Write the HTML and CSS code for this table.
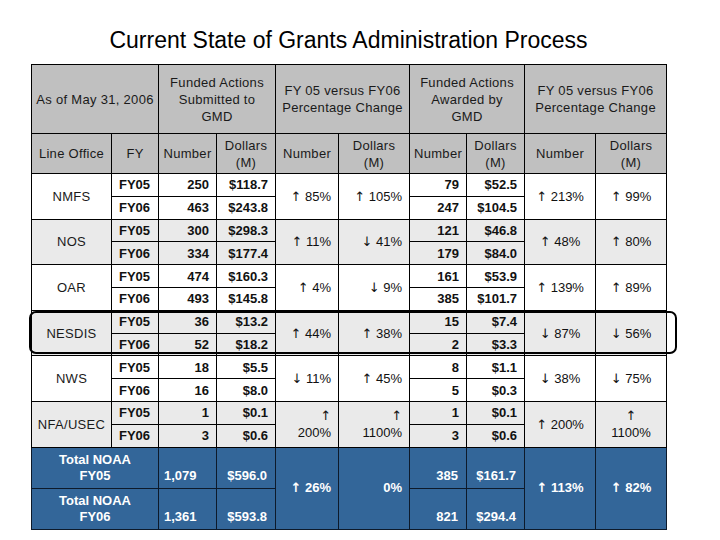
FILE: index.html
```html
<!DOCTYPE html>
<html>
<head>
<meta charset="utf-8">
<link rel="stylesheet" href="styles.css">
</head>
<body>
<div class="slide">
  <h1 class="title">Current State of Grants Administration Process</h1>
  <div class="table-wrap">
    <table class="grid">
      <colgroup>
        <col class="c-office"><col class="c-fy"><col class="c-num"><col class="c-dol">
        <col class="c-pn"><col class="c-pd"><col class="c-num2"><col class="c-dol2">
        <col class="c-pn2"><col class="c-pd2">
      </colgroup>
      <thead>
        <tr class="h1">
          <th colspan="2">As of May 31, 2006</th>
          <th colspan="2">Funded Actions<br>Submitted to<br>GMD</th>
          <th colspan="2">FY 05 versus FY06<br>Percentage Change</th>
          <th colspan="2">Funded Actions<br>Awarded by<br>GMD</th>
          <th colspan="2">FY 05 versus FY06<br>Percentage Change</th>
        </tr>
        <tr class="h2">
          <th>Line Office</th><th>FY</th><th>Number</th><th>Dollars<br>(M)</th>
          <th>Number</th><th>Dollars<br>(M)</th><th>Number</th><th>Dollars<br>(M)</th>
          <th>Number</th><th>Dollars<br>(M)</th>
        </tr>
      </thead>
      <tbody>
        <tr class="r white">
          <td rowspan="2" class="office">NMFS</td><td class="fy">FY05</td><td class="val">250</td><td class="val">$118.7</td>
          <td rowspan="2" class="pl"><span class="arr">↑</span> 85%</td><td rowspan="2" class="pl"><span class="arr">↑</span> 105%</td>
          <td class="val">79</td><td class="val">$52.5</td>
          <td rowspan="2" class="pr"><span class="arr">↑</span> 213%</td><td rowspan="2" class="pr"><span class="arr">↑</span> 99%</td>
        </tr>
        <tr class="r white">
          <td class="fy">FY06</td><td class="val">463</td><td class="val">$243.8</td>
          <td class="val">247</td><td class="val">$104.5</td>
        </tr>
        <tr class="r gray">
          <td rowspan="2" class="office">NOS</td><td class="fy">FY05</td><td class="val">300</td><td class="val">$298.3</td>
          <td rowspan="2" class="pl"><span class="arr">↑</span> 11%</td><td rowspan="2" class="pl"><span class="arr">↓</span> 41%</td>
          <td class="val">121</td><td class="val">$46.8</td>
          <td rowspan="2" class="pr"><span class="arr">↑</span> 48%</td><td rowspan="2" class="pr"><span class="arr">↑</span> 80%</td>
        </tr>
        <tr class="r gray">
          <td class="fy">FY06</td><td class="val">334</td><td class="val">$177.4</td>
          <td class="val">179</td><td class="val">$84.0</td>
        </tr>
        <tr class="r white">
          <td rowspan="2" class="office">OAR</td><td class="fy">FY05</td><td class="val">474</td><td class="val">$160.3</td>
          <td rowspan="2" class="pl"><span class="arr">↑</span> 4%</td><td rowspan="2" class="pl"><span class="arr">↓</span> 9%</td>
          <td class="val">161</td><td class="val">$53.9</td>
          <td rowspan="2" class="pr"><span class="arr">↑</span> 139%</td><td rowspan="2" class="pr"><span class="arr">↑</span> 89%</td>
        </tr>
        <tr class="r white">
          <td class="fy">FY06</td><td class="val">493</td><td class="val">$145.8</td>
          <td class="val">385</td><td class="val">$101.7</td>
        </tr>
        <tr class="r gray">
          <td rowspan="2" class="office">NESDIS</td><td class="fy">FY05</td><td class="val">36</td><td class="val">$13.2</td>
          <td rowspan="2" class="pl"><span class="arr">↑</span> 44%</td><td rowspan="2" class="pl"><span class="arr">↑</span> 38%</td>
          <td class="val">15</td><td class="val">$7.4</td>
          <td rowspan="2" class="pr"><span class="arr">↓</span> 87%</td><td rowspan="2" class="pr"><span class="arr">↓</span> 56%</td>
        </tr>
        <tr class="r gray">
          <td class="fy">FY06</td><td class="val">52</td><td class="val">$18.2</td>
          <td class="val">2</td><td class="val">$3.3</td>
        </tr>
        <tr class="r white">
          <td rowspan="2" class="office">NWS</td><td class="fy">FY05</td><td class="val">18</td><td class="val">$5.5</td>
          <td rowspan="2" class="pl"><span class="arr">↓</span> 11%</td><td rowspan="2" class="pl"><span class="arr">↑</span> 45%</td>
          <td class="val">8</td><td class="val">$1.1</td>
          <td rowspan="2" class="pr"><span class="arr">↓</span> 38%</td><td rowspan="2" class="pr"><span class="arr">↓</span> 75%</td>
        </tr>
        <tr class="r white">
          <td class="fy">FY06</td><td class="val">16</td><td class="val">$8.0</td>
          <td class="val">5</td><td class="val">$0.3</td>
        </tr>
        <tr class="r gray">
          <td rowspan="2" class="office">NFA/USEC</td><td class="fy">FY05</td><td class="val">1</td><td class="val">$0.1</td>
          <td rowspan="2" class="pl wrap"><span class="arr">↑</span><br>200%</td><td rowspan="2" class="pl wrap"><span class="arr">↑</span><br>1100%</td>
          <td class="val">1</td><td class="val">$0.1</td>
          <td rowspan="2" class="pr"><span class="arr">↑</span> 200%</td><td rowspan="2" class="pr wrap"><span class="arr">↑</span><br>1100%</td>
        </tr>
        <tr class="r gray">
          <td class="fy">FY06</td><td class="val">3</td><td class="val">$0.6</td>
          <td class="val">3</td><td class="val">$0.6</td>
        </tr>
        <tr class="t">
          <td colspan="2" class="tot-label">Total NOAA<br>FY05</td>
          <td class="tot-num">1,079</td><td class="tot-val">$596.0</td>
          <td rowspan="2" class="pl"><span class="arr">↑</span> 26%</td><td rowspan="2" class="pl">0%</td>
          <td class="tot-val">385</td><td class="tot-val">$161.7</td>
          <td rowspan="2" class="pr"><span class="arr">↑</span> 113%</td><td rowspan="2" class="pr"><span class="arr">↑</span> 82%</td>
        </tr>
        <tr class="t">
          <td colspan="2" class="tot-label">Total NOAA<br>FY06</td>
          <td class="tot-num">1,361</td><td class="tot-val">$593.8</td>
          <td class="tot-val">821</td><td class="tot-val">$294.4</td>
        </tr>
      </tbody>
    </table>
    <div class="highlight"></div>
  </div>
</div>
</body>
</html>
```

FILE: styles.css
```css
html, body {
  margin: 0;
  padding: 0;
  background: #ffffff;
}

body {
  font-family: "Liberation Sans", Arial, sans-serif;
  color: #111111;
}

.slide {
  width: 635px;
  padding: 27px 0 0 31px;
}

.title {
  margin: 0 0 11px 0;
  font-size: 23px;
  line-height: 26px;
  font-weight: normal;
  text-align: center;
  color: #000000;
}

.table-wrap {
  position: relative;
}

.grid {
  border-collapse: collapse;
  table-layout: fixed;
  width: 635px;
  font-size: 13px;
}

.c-office { width: 80px; }
.c-fy { width: 47px; }
.c-num { width: 58px; }
.c-dol { width: 59px; }
.c-pn { width: 63px; }
.c-pd { width: 71px; }
.c-num2 { width: 57px; }
.c-dol2 { width: 58px; }
.c-pn2 { width: 71px; }
.c-pd2 { width: 71px; }

.grid th,
.grid td {
  border: 1px solid #000000;
  padding: 0;
  vertical-align: middle;
}

.grid th {
  background: #c0c0c0;
  font-weight: normal;
  line-height: 17px;
  letter-spacing: 0.3px;
  color: #1a1a1a;
  text-align: center;
}

.h1 { height: 69px; }
.h2 { height: 40px; }

.r { height: 22.8px; }
.r td { line-height: 15px; }
.white td { background: #ffffff; }
.gray td { background: #eaeaea; }

.office {
  text-align: center;
  color: #1a1a1a;
  letter-spacing: 0.3px;
}

.fy {
  font-weight: bold;
  text-align: left;
  padding-left: 7px !important;
}

.val {
  font-weight: bold;
  text-align: right;
  padding-right: 7px !important;
}

.pl {
  text-align: right;
  padding-right: 7px !important;
}

.pr {
  text-align: center;
}

.wrap {
  line-height: 17px !important;
}

.arr {
  font-family: "DejaVu Sans", sans-serif;
  font-size: 13px;
  font-weight: normal;
}

.t .arr {
  font-weight: bold;
}

.t { height: 41px; }

.t td {
  background: #336699;
  color: #ffffff;
  font-weight: bold;
  border-color: #0d1a2b;
  line-height: 16px;
}

.t .tot-label {
  text-align: center;
}

.t .tot-num {
  text-align: left;
  vertical-align: bottom;
  padding: 0 0 4px 5px;
}

.t .tot-val {
  text-align: right;
  vertical-align: bottom;
  padding: 0 8px 4px 0;
}

.highlight {
  position: absolute;
  left: -2px;
  top: 247px;
  width: 644px;
  height: 39px;
  border: 2px solid #000000;
  border-radius: 7px;
  pointer-events: none;
}
```
